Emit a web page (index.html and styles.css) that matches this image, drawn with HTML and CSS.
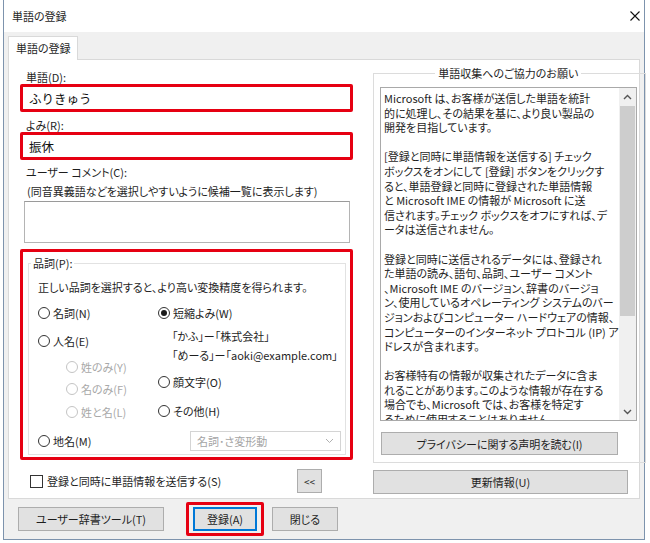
FILE: index.html
```html
<!DOCTYPE html>
<html lang="ja">
<head>
  <meta charset="UTF-8">
  <title>単語の登録</title>
  <link rel="stylesheet" href="styles.css">
</head>
<body>
  <div class="window">
    <!-- Title bar -->
    <div class="titlebar">
      <span class="title">単語の登録</span>
      <svg class="close" width="10" height="10" viewBox="0 0 10 10"><path d="M0.5 0.5L9.5 9.5M9.5 0.5L0.5 9.5" stroke="#111" stroke-width="1.1"/></svg>
    </div>

    <div class="tabs"><div class="tab">単語の登録</div></div>

    <div class="panel">
      <!-- Left: word entry -->
      <div class="col-left">
        <div class="lbl">単語(D):</div>
        <div class="mark field">ふりきゅう</div>
        <div class="lbl lbl-next">よみ(R):</div>
        <div class="mark field">振休</div>
        <div class="lbl lbl-comment">ユーザー コメント(C):</div>
        <div class="lbl hint">(同音異義語などを選択しやすいように候補一覧に表示します)</div>
        <div class="comment"></div>

        <div class="mark pos-box">
          <fieldset class="pos-group">
            <legend>品詞(P):</legend>
            <p class="pos-intro">正しい品詞を選択すると、より高い変換精度を得られます。</p>
            <div class="pos-cols">
              <div class="pos-col pos-col-left">
                <div class="radio"><span class="circle"></span>名詞(N)</div>
                <div class="radio r-person"><span class="circle"></span>人名(E)</div>
                <div class="radio sub r-sub1 disabled"><span class="circle"></span>姓のみ(Y)</div>
                <div class="radio sub r-sub2 disabled"><span class="circle"></span>名のみ(F)</div>
                <div class="radio sub r-sub3 disabled"><span class="circle"></span>姓と名(L)</div>
              </div>
              <div class="pos-col">
                <div class="radio checked"><span class="circle"></span>短縮よみ(W)</div>
                <div class="sample s-first">「かふ」ー「株式会社」</div>
                <div class="sample s-second">「めーる」ー「aoki@example.com」</div>
                <div class="radio r-face"><span class="circle"></span>顔文字(O)</div>
                <div class="radio r-other"><span class="circle"></span>その他(H)</div>
              </div>
            </div>
            <div class="pos-row">
              <div class="radio r-place"><span class="circle"></span>地名(M)</div>
              <div class="select">
                <span>名詞･さ変形動</span>
                <svg width="9" height="6" viewBox="0 0 9 6"><path d="M1 1L4.5 4.5L8 1" stroke="#b0b0b0" fill="none"/></svg>
              </div>
            </div>
          </fieldset>
        </div>

        <div class="send-row">
          <span class="check"></span>
          <span>登録と同時に単語情報を送信する(S)</span>
          <button class="btn btn-toggle">&lt;&lt;</button>
        </div>
      </div>

      <!-- Right: data collection notice -->
      <div class="col-right">
        <fieldset class="collect">
          <legend>単語収集へのご協力のお願い</legend>
          <div class="textbox">
            <div class="tb-text">
              <p>Microsoft は、お客様が送信した単語を統計<br>的に処理し、その結果を基に、より良い製品の<br>開発を目指しています。</p>
              <p>[登録と同時に単語情報を送信する] チェック<br>ボックスをオンにして [登録] ボタンをクリックす<br>ると、単語登録と同時に登録された単語情報<br>と Microsoft IME の情報が Microsoft に送<br>信されます。チェック ボックスをオフにすれば、デ<br>ータは送信されません。</p>
              <p>登録と同時に送信されるデータには、登録され<br>た単語の読み、語句、品詞、ユーザー コメント<br>、Microsoft IME のバージョン、辞書のバージョ<br>ン、使用しているオペレーティング システムのバー<br>ジョンおよびコンピューター ハードウェアの情報、<br>コンピューターのインターネット プロトコル (IP) ア<br>ドレスが含まれます。</p>
              <p>お客様特有の情報が収集されたデータに含ま<br>れることがあります。このような情報が存在する<br>場合でも、Microsoft では、お客様を特定す<br>るために使用することはありません。</p>
            </div>
            <div class="scroll">
              <div class="arrow"><svg width="9" height="6" viewBox="0 0 9 6"><path d="M1 5L4.5 1.5L8 5" stroke="#555" stroke-width="1.4" fill="none"/></svg></div>
              <div class="thumb"></div>
              <div class="track"></div>
              <div class="arrow"><svg width="9" height="6" viewBox="0 0 9 6"><path d="M1 1L4.5 4.5L8 1" stroke="#555" stroke-width="1.4" fill="none"/></svg></div>
            </div>
          </div>
          <button class="btn btn-privacy">プライバシーに関する声明を読む(I)</button>
        </fieldset>
        <button class="btn btn-update">更新情報(U)</button>
      </div>
    </div>

    <!-- Bottom buttons -->
    <div class="footer">
      <button class="btn btn-tool">ユーザー辞書ツール(T)</button>
      <div class="mark default-wrap"><button class="btn btn-default">登録(A)</button></div>
      <button class="btn btn-close">閉じる</button>
    </div>
  </div>
</body>
</html>
```

FILE: styles.css
```css
body {
  margin: 0;
  background: #ffffff;
  font-family: "Noto Sans CJK JP", "Noto Sans", sans-serif;
  font-size: 11px;
  color: #1e1e1e;
  font-feature-settings: "palt";
}

.window {
  margin-left: 3px;
  width: 640px;
  height: 539px;
  border: 1px solid #7d93ad;
  border-top: 0;
  background: #f0f0f0;
  display: flex;
  flex-direction: column;
}

/* Title bar */
.titlebar {
  height: 32px;
  flex: none;
  background: #ffffff;
  display: flex;
  align-items: center;
  justify-content: space-between;
  padding: 0 4px 0 8px;
}

/* Tab strip */
.tabs {
  height: 27px;
  flex: none;
  box-sizing: border-box;
  padding: 4px 0 0 4px;
}

.tab {
  position: relative;
  z-index: 1;
  width: 70px;
  height: 24px;
  box-sizing: border-box;
  background: #ffffff;
  border: 1px solid #d9d9d9;
  border-bottom: 0;
  padding-left: 7px;
  line-height: 23px;
}

.panel {
  height: 440px;
  flex: none;
  box-sizing: border-box;
  margin: 0 4px;
  border: 1px solid #d9d9d9;
  background: #ffffff;
  display: flex;
  gap: 20px;
  padding: 0 10px 0 11px;
}

/* Red highlight frames */
.mark {
  border: 3px solid #e60012;
  border-radius: 2px;
  box-sizing: border-box;
}

/* Left column */
.col-left {
  width: 333px;
  padding-top: 10px;
}

.lbl {
  line-height: 14px;
  padding-left: 6px;
}

.field {
  height: 28px;
  display: flex;
  align-items: center;
  padding-left: 6px;
  font-size: 12.5px;
  font-feature-settings: normal;
  color: #111;
}

.lbl-next {
  margin-top: 6px;
}

.lbl-comment {
  margin-top: 5px;
}

.hint {
  margin-top: 5px;
  padding-left: 7px;
}

.comment {
  height: 42px;
  box-sizing: border-box;
  margin: 3px 3px 0 4px;
  border: 1px solid #b4b4b4;
  border-top-color: #9a9a9a;
}

.pos-box {
  margin-top: 6px;
  height: 211px;
  padding: 4px 4px 0 5px;
}

.pos-group {
  margin: 0;
  height: 199px;
  box-sizing: border-box;
  border: 1px solid #e2e2e2;
  padding: 0 0 0 9px;
}

.pos-group legend {
  margin-left: -7px;
  padding: 0 2px;
  line-height: 14px;
}

.pos-intro {
  margin: 10px 0 0;
  line-height: 14px;
}

.pos-cols {
  display: flex;
  margin-top: 11px;
}

.pos-col-left {
  width: 120px;
}

.radio {
  display: flex;
  align-items: center;
  gap: 3px;
  height: 16px;
}

.circle {
  width: 12px;
  height: 12px;
  box-sizing: border-box;
  border: 1px solid #333;
  border-radius: 50%;
  background: #fff;
  display: flex;
  align-items: center;
  justify-content: center;
}

.checked .circle::after {
  content: "";
  width: 6px;
  height: 6px;
  border-radius: 50%;
  background: #1a1a1a;
}

.disabled {
  color: #a8a8a8;
}

.disabled .circle {
  border-color: #c4c4c4;
}

.sub {
  padding-left: 28px;
}

.r-person { margin-top: 12px; }
.r-sub1 { margin-top: 10px; }
.r-sub2 { margin-top: 6px; }
.r-sub3 { margin-top: 7px; }

.sample {
  line-height: 16px;
  padding-left: 14px;
}

.s-first { margin-top: 7px; }
.s-second { margin-top: 3px; }
.r-face { margin-top: 11px; }
.r-other { margin-top: 13px; }

.pos-row {
  display: flex;
  align-items: center;
  height: 20px;
  margin-top: 11px;
}

.r-place {
  width: 152px;
}

.select {
  width: 151px;
  height: 20px;
  box-sizing: border-box;
  border: 1px solid #d4d4d4;
  color: #a4a4a4;
  display: flex;
  align-items: center;
  justify-content: space-between;
  padding: 0 6px;
}

.send-row {
  display: flex;
  align-items: center;
  gap: 4px;
  height: 24px;
  margin-top: 9px;
  padding-left: 10px;
}

.check {
  width: 13px;
  height: 13px;
  box-sizing: border-box;
  border: 1px solid #333;
  background: #fff;
}

/* Buttons */
.btn {
  height: 24px;
  box-sizing: border-box;
  padding: 0;
  background: #e1e1e1;
  border: 1px solid #adadad;
  font: inherit;
  color: #1e1e1e;
}

.btn-toggle {
  width: 25px;
  margin-left: auto;
  margin-right: 31px;
  font-size: 10px;
}

/* Right column */
.col-right {
  width: 255px;
  padding-top: 6px;
}

.collect {
  margin: 0;
  border: 1px solid #dcdcdc;
  padding: 7px 8px 7px 6px;
}

.collect legend {
  margin: 0 auto;
  padding: 0 3px;
  line-height: 14px;
}

.textbox {
  height: 334px;
  box-sizing: border-box;
  border: 1px solid #a9a9a9;
  display: flex;
}

.tb-text {
  flex: 1;
  overflow: hidden;
  padding: 3px 0 0 3px;
  font-size: 11px;
  line-height: 14.6px;
  white-space: nowrap;
}

.tb-text p {
  margin: 0 0 14.6px;
}

.scroll {
  width: 17px;
  background: #f0f0f0;
  display: flex;
  flex-direction: column;
}

.arrow {
  height: 17px;
  display: flex;
  align-items: center;
  justify-content: center;
}

.thumb {
  height: 210px;
  margin: 1px 1px 0;
  background: #cdcdcd;
}

.track {
  flex: 1;
}

.btn-privacy {
  display: block;
  width: 237px;
  height: 23px;
  margin: 11px 0 0 1px;
}

.btn-update {
  display: block;
  width: 100%;
  margin-top: 7px;
}

/* Footer */
.footer {
  flex: 1;
  display: flex;
  align-items: center;
  padding-left: 14px;
}

.btn-tool {
  width: 146px;
}

.default-wrap {
  margin-left: 22px;
  padding: 2px 4px;
}

.btn-default {
  width: 64px;
  display: block;
  border-color: #0078d7;
  box-shadow: inset 0 0 0 1px #0078d7;
}

.btn-close {
  width: 66px;
  margin-left: 8px;
}
```
